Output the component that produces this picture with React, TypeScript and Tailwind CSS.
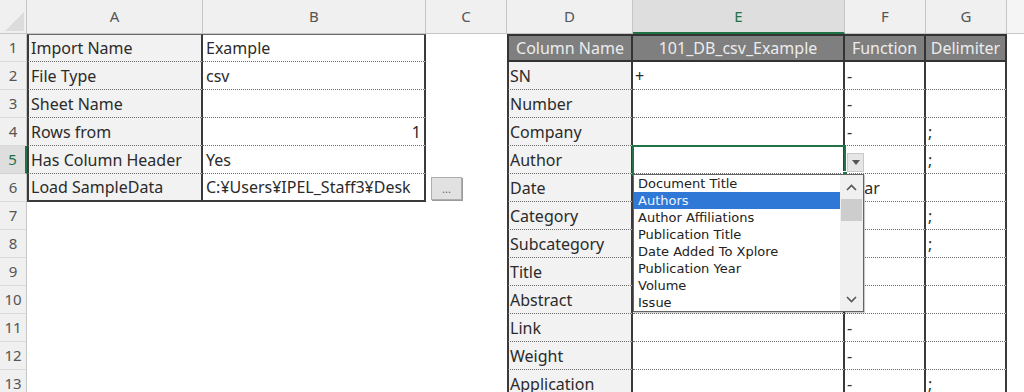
import React from "react";

const columns = ["A", "B", "C", "D", "E", "F", "G"];

const leftRows: [string, string][] = [
  ["Import Name", "Example"],
  ["File Type", "csv"],
  ["Sheet Name", ""],
  ["Rows from", "1"],
  ["Has Column Header", "Yes"],
  ["Load SampleData", "C:¥Users¥IPEL_Staff3¥Desk"],
];

const rightHeader = ["Column Name", "101_DB_csv_Example", "Function", "Delimiter"];

const rightRows: string[][] = [
  ["SN", "+", "-", ""],
  ["Number", "", "-", ""],
  ["Company", "", "-", ";"],
  ["Author", "", "", ";"],
  ["Date", "", "Year", ""],
  ["Category", "", "", ";"],
  ["Subcategory", "", "", ";"],
  ["Title", "", "", ""],
  ["Abstract", "", "", ""],
  ["Link", "", "-", ""],
  ["Weight", "", "-", ""],
  ["Application", "", "-", ";"],
];

const options = [
  "Document Title",
  "Authors",
  "Author Affiliations",
  "Publication Title",
  "Date Added To Xplore",
  "Publication Year",
  "Volume",
  "Issue",
];

const dotted = "border-b border-b-[#6a6a6a] [border-bottom-style:dotted]";

function Cell({ children, className = "" }: { children?: React.ReactNode; className?: string }) {
  return (
    <div className={`flex items-center overflow-hidden whitespace-nowrap ${className}`}>{children}</div>
  );
}

export default function App() {
  const rowCount = 13;

  return (
    <div
      className="relative h-[392px] w-[1024px] overflow-hidden bg-white text-[16px] text-[#2b2b2b]"
      style={{ fontFamily: '"Noto Sans", "Noto Sans CJK JP", sans-serif' }}
    >
      <div className="grid grid-cols-[27px_176px_223px_81px_126px_212px_81px_81px_1fr] grid-rows-[34px_repeat(13,28px)]">
        {/* corner */}
        <div className="relative border-b border-r border-[#c6c6c6] bg-[#f0f0f0]">
          <svg className="absolute left-[5px] top-[12px]" width="19" height="19" viewBox="0 0 19 19">
            <polygon points="19,0 19,19 0,19" fill="#dcdcdc" />
          </svg>
        </div>

        {/* column headers */}
        {columns.map((c) => (
          <Cell
            key={c}
            className={`justify-center text-[15px] ${
              c === "E"
                ? "border-b-2 border-r border-b-[#217346] border-r-[#c6c6c6] bg-[#dedede] text-[#217346]"
                : "border-b border-r border-[#c6c6c6] bg-[#f0f0f0] text-[#555]"
            }`}
          >
            {c}
          </Cell>
        ))}
        <div className="border-b border-[#c6c6c6] bg-[#f5f5f5]" />

        {Array.from({ length: rowCount }).map((_, i) => {
          const r = i + 1;
          const left = leftRows[i];
          const isLeftLast = r === leftRows.length;
          const rightRow = r === 1 ? null : rightRows[i - 1];
          return (
            <React.Fragment key={r}>
              {/* row header */}
              <Cell
                className={`justify-center text-[15px] ${
                  r === 5
                    ? "border-b border-r-2 border-b-[#d2d2d2] border-r-[#217346] bg-[#dedede] text-[#217346]"
                    : "border-b border-r border-b-[#dadada] border-r-[#c6c6c6] bg-[#f0f0f0] text-[#555]"
                }`}
              >
                {r}
              </Cell>

              {/* A & B */}
              {left ? (
                <>
                  <Cell
                    className={`border-l-2 border-r-2 border-l-[#3a3a3a] border-r-[#3a3a3a] bg-[#f2f2f2] pl-[2px] ${
                      r === 1 ? "border-t border-t-[#6a6a6a]" : ""
                    } ${isLeftLast ? "border-b-2 border-b-[#3a3a3a]" : dotted}`}
                  >
                    {left[0]}
                  </Cell>
                  <Cell
                    className={`border-r-2 border-r-[#3a3a3a] px-[3px] ${r === 4 ? "justify-end" : ""} ${
                      r === 1 ? "border-t border-t-[#6a6a6a]" : ""
                    } ${isLeftLast ? "border-b-2 border-b-[#3a3a3a]" : dotted}`}
                  >
                    {left[1]}
                  </Cell>
                </>
              ) : (
                <>
                  <div />
                  <div />
                </>
              )}

              {/* C */}
              <Cell className="pl-[5px]">
                {r === 6 && (
                  <div className="flex h-[23px] w-[31px] items-center justify-center border border-[#adadad] bg-[#e1e1e1] text-[11px] leading-none text-[#666] shadow-[1px_1px_0_#9a9a9a]">
                    ...
                  </div>
                )}
              </Cell>

              {/* D - G */}
              {r === 1 ? (
                rightHeader.map((h, j) => (
                  <Cell
                    key={h}
                    className={`justify-center border-y-2 border-r-2 border-[#333] bg-[#7f7f7f] text-[#ececec] ${
                      j === 0 ? "border-l-2" : ""
                    }`}
                  >
                    {h}
                  </Cell>
                ))
              ) : (
                rightRow!.map((v, j) => (
                  <Cell
                    key={j}
                    className={`border-r-2 border-r-[#3a3a3a] ${dotted} ${
                      j === 0 ? "border-l-2 border-l-[#3a3a3a] bg-[#f2f2f2] pl-[1px]" : "pl-[2px]"
                    }`}
                  >
                    {v}
                  </Cell>
                ))
              )}
              <div />
            </React.Fragment>
          );
        })}
      </div>

      {/* selected cell E5 */}
      <div className="absolute left-[632px] top-[145px] h-[31px] w-[214px] border-2 border-[#217346]" />
      <div className="absolute left-[842px] top-[171px] h-[6px] w-[6px] border border-white bg-[#217346]" />

      {/* dropdown button */}
      <div className="absolute left-[847px] top-[153px] flex h-[19px] w-[17px] items-center justify-center border border-[#c8c8c8] bg-[#e6e6e6]">
        <svg width="8" height="5" viewBox="0 0 8 5">
          <polygon points="0,0 8,0 4,5" fill="#555" />
        </svg>
      </div>

      {/* dropdown list */}
      <div
        className="absolute left-[633px] top-[174px] flex h-[138px] w-[231px] border border-[#646464] bg-white text-[13px] text-[#222] shadow-[1px_1px_1px_rgba(0,0,0,0.2)]"
        style={{ fontFamily: '"DejaVu Sans", sans-serif' }}
      >
        <div className="flex flex-1 flex-col">
          {options.map((o) => (
            <div
              key={o}
              className={`flex h-[17px] items-center pl-[4px] leading-none ${
                o === "Authors" ? "bg-[#2f78d5] text-[#eef4ff]" : ""
              }`}
            >
              {o}
            </div>
          ))}
        </div>
        <div className="flex w-[23px] flex-col items-center bg-[#f0f0f0]">
          <div className="flex h-[24px] w-full items-center justify-center">
            <svg width="11" height="7" viewBox="0 0 11 7">
              <polyline points="1,6 5.5,1.5 10,6" fill="none" stroke="#555" strokeWidth="1.6" />
            </svg>
          </div>
          <div className="h-[22px] w-[21px] bg-[#cdcdcd]" />
          <div className="flex-1" />
          <div className="flex h-[24px] w-full items-center justify-center">
            <svg width="11" height="7" viewBox="0 0 11 7">
              <polyline points="1,1 5.5,5.5 10,1" fill="none" stroke="#555" strokeWidth="1.6" />
            </svg>
          </div>
        </div>
      </div>
    </div>
  );
}
